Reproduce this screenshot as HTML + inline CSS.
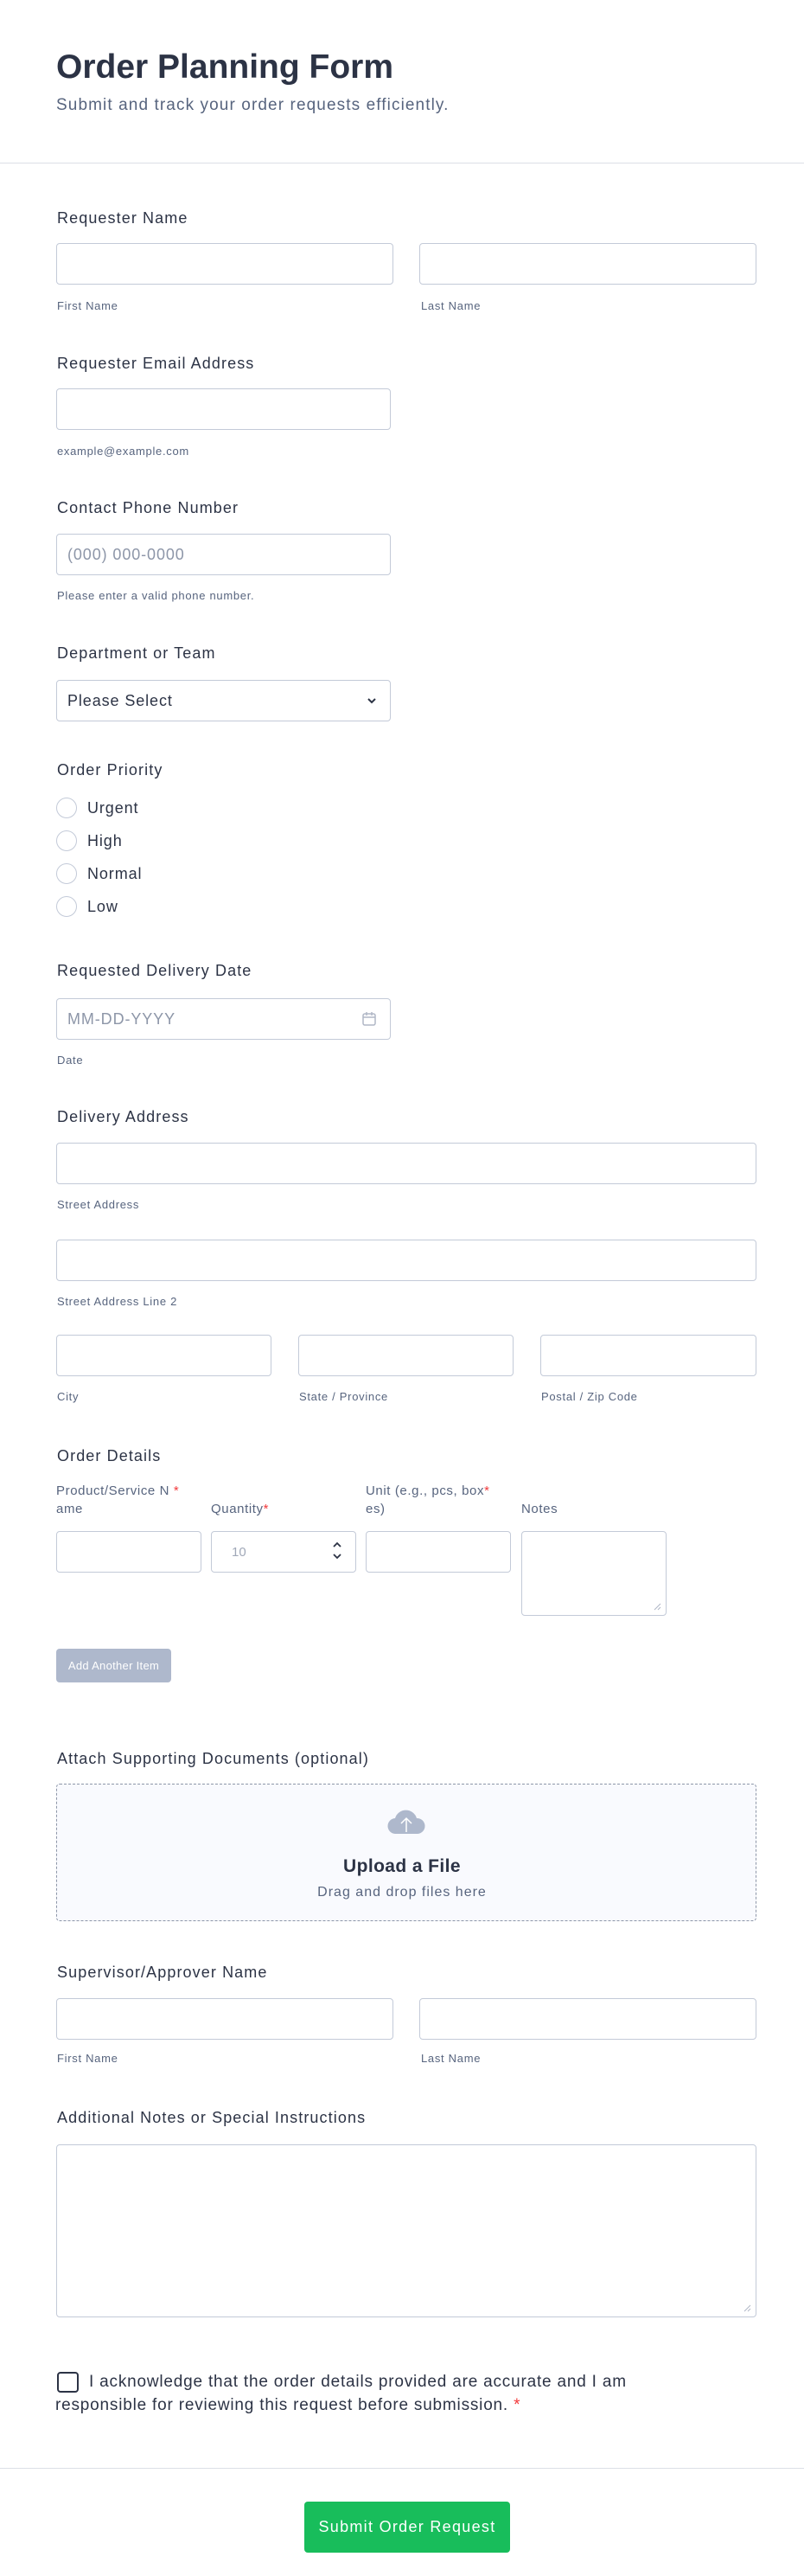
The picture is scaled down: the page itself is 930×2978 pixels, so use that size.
<!DOCTYPE html>
<html><head><meta charset="utf-8"><style>
*{box-sizing:border-box;margin:0;padding:0}
body{width:930px;height:2978px;position:relative;background:#fff;font-family:"Liberation Sans",Arial,sans-serif;color:#2c3345;overflow:hidden}
.a{position:absolute}
.t{position:absolute;white-space:nowrap;line-height:1}
.lbl{font-size:18px;color:#2c3345;letter-spacing:1.1px}
.sub{font-size:13px;color:#57647e;letter-spacing:0.7px}
.in{position:absolute;border:1px solid #c3cad8;border-radius:4px;background:#fff}
.ph{font-size:18px;color:#8d96a8;letter-spacing:0.9px}
.hr{position:absolute;left:0;width:930px;height:1px;background:#dcdfe6}
.radio{position:absolute;width:24px;height:24px;border:1.5px solid #c3cad8;border-radius:50%;left:65px}
.rl{font-size:18px;color:#2c3345;letter-spacing:0.9px}
.req{color:#f23a3c}
.ch{font-size:15px;color:#57647e;letter-spacing:0.6px}
</style></head><body>
<div class="t" style="left:65px;top:58px;font-size:39px;font-weight:bold;color:#2c3345">Order Planning Form</div>
<div class="t" style="left:65px;top:112px;font-size:19px;color:#57647e;letter-spacing:1.1px">Submit and track your order requests efficiently.</div>
<div class="hr" style="top:188px"></div>

<div class="t lbl" style="left:66px;top:243px">Requester Name</div>
<div class="in" style="left:65px;top:281px;width:390px;height:48px"></div>
<div class="in" style="left:485px;top:281px;width:390px;height:48px"></div>
<div class="t sub" style="left:66px;top:347px">First Name</div>
<div class="t sub" style="left:487px;top:347px">Last Name</div>

<div class="t lbl" style="left:66px;top:411px">Requester Email Address</div>
<div class="in" style="left:65px;top:449px;width:387px;height:48px"></div>
<div class="t sub" style="left:66px;top:515px">example@example.com</div>

<div class="t lbl" style="left:66px;top:578px">Contact Phone Number</div>
<div class="in" style="left:65px;top:617px;width:387px;height:48px"></div>
<div class="t ph" style="left:78px;top:632px">(000) 000-0000</div>
<div class="t sub" style="left:66px;top:682px">Please enter a valid phone number.</div>

<div class="t lbl" style="left:66px;top:746px">Department or Team</div>
<div class="in" style="left:65px;top:786px;width:387px;height:48px"></div>
<div class="t" style="left:78px;top:801px;font-size:18px;color:#2c3345;letter-spacing:0.9px">Please Select</div>
<svg class="a" style="left:423px;top:804px" width="14" height="12" viewBox="0 0 14 12"><path d="M3 4l4 4 4-4" fill="none" stroke="#2c3345" stroke-width="2"/></svg>

<div class="t lbl" style="left:66px;top:881px">Order Priority</div>
<div class="radio" style="top:922px"></div><div class="t rl" style="left:101px;top:925px">Urgent</div>
<div class="radio" style="top:960px"></div><div class="t rl" style="left:101px;top:963px">High</div>
<div class="radio" style="top:998px"></div><div class="t rl" style="left:101px;top:1001px">Normal</div>
<div class="radio" style="top:1036px"></div><div class="t rl" style="left:101px;top:1039px">Low</div>

<div class="t lbl" style="left:66px;top:1113px">Requested Delivery Date</div>
<div class="in" style="left:65px;top:1154px;width:387px;height:48px"></div>
<div class="t ph" style="left:78px;top:1169px">MM-DD-YYYY</div>
<svg class="a" style="left:418px;top:1169px" width="18" height="18" viewBox="0 0 18 18"><rect x="2" y="3" width="14" height="13" rx="2" fill="none" stroke="#b0b7c6" stroke-width="1.5"/><path d="M2 7h14M6 1v4M12 1v4" stroke="#b0b7c6" stroke-width="1.5"/></svg>
<div class="t sub" style="left:66px;top:1219px">Date</div>

<div class="t lbl" style="left:66px;top:1282px">Delivery Address</div>
<div class="in" style="left:65px;top:1321px;width:810px;height:48px"></div>
<div class="t sub" style="left:66px;top:1386px">Street Address</div>
<div class="in" style="left:65px;top:1433px;width:810px;height:48px"></div>
<div class="t sub" style="left:66px;top:1498px">Street Address Line 2</div>
<div class="in" style="left:65px;top:1543px;width:249px;height:48px"></div>
<div class="in" style="left:345px;top:1543px;width:249px;height:48px"></div>
<div class="in" style="left:625px;top:1543px;width:250px;height:48px"></div>
<div class="t sub" style="left:66px;top:1608px">City</div>
<div class="t sub" style="left:346px;top:1608px">State / Province</div>
<div class="t sub" style="left:626px;top:1608px">Postal / Zip Code</div>

<div class="t lbl" style="left:66px;top:1674px">Order Details</div>
<div class="t ch" style="left:65px;top:1716px">Product/Service N <span class="req">*</span></div>
<div class="t ch" style="left:65px;top:1737px">ame</div>
<div class="t ch" style="left:244px;top:1737px">Quantity<span class="req">*</span></div>
<div class="t ch" style="left:423px;top:1716px">Unit (e.g., pcs, box<span class="req">*</span></div>
<div class="t ch" style="left:423px;top:1737px">es)</div>
<div class="t ch" style="left:603px;top:1737px">Notes</div>
<div class="in" style="left:65px;top:1770px;width:168px;height:48px"></div>
<div class="in" style="left:244px;top:1770px;width:168px;height:48px"></div>
<div class="t" style="left:268px;top:1787px;font-size:15px;color:#a0a8b8">10</div>
<svg class="a" style="left:383px;top:1780px" width="14" height="26" viewBox="0 0 14 26"><path d="M3 8l4-4 4 4M3 17l4 4 4-4" fill="none" stroke="#2c3345" stroke-width="1.8"/></svg>
<div class="in" style="left:423px;top:1770px;width:168px;height:48px"></div>
<div class="in" style="left:603px;top:1770px;width:168px;height:98px"></div>
<svg class="a" style="left:755px;top:1852px" width="10" height="10" viewBox="0 0 10 10"><path d="M9 2L2 9M9 6L6 9" stroke="#b0b7c6"/></svg>
<div class="a" style="left:65px;top:1906px;width:133px;height:39px;background:#aeb8cc;border-radius:4px;color:#fff;font-size:13px;line-height:39px;text-align:center;letter-spacing:0.3px">Add Another Item</div>

<div class="t lbl" style="left:66px;top:2024px">Attach Supporting Documents (optional)</div>
<div class="a" style="left:65px;top:2062px;width:810px;height:159px;border:1.5px dashed #8d96a8;border-radius:4px;background:#f9fafe"></div>
<svg class="a" style="left:446px;top:2088px" width="48" height="36" viewBox="0 0 48 36"><path d="M12 32a9 9 0 0 1-1-18 13 13 0 0 1 25 0 9 9 0 0 1 1 18z" fill="#aeb8cc"/><path d="M24 30V14M18 20l6-6 6 6" fill="none" stroke="#fff" stroke-width="1.5"/></svg>
<div class="t" style="left:0;width:930px;text-align:center;top:2147px;font-size:21px;font-weight:bold;color:#2c3345;letter-spacing:0.4px">Upload a File</div>
<div class="t" style="left:0;width:930px;text-align:center;top:2180px;font-size:16px;color:#57647e;letter-spacing:1px">Drag and drop files here</div>

<div class="t lbl" style="left:66px;top:2271px">Supervisor/Approver Name</div>
<div class="in" style="left:65px;top:2310px;width:390px;height:48px"></div>
<div class="in" style="left:485px;top:2310px;width:390px;height:48px"></div>
<div class="t sub" style="left:66px;top:2373px">First Name</div>
<div class="t sub" style="left:487px;top:2373px">Last Name</div>

<div class="t lbl" style="left:66px;top:2439px">Additional Notes or Special Instructions</div>
<div class="in" style="left:65px;top:2479px;width:810px;height:200px"></div>
<svg class="a" style="left:859px;top:2663px" width="10" height="10" viewBox="0 0 10 10"><path d="M9 2L2 9M9 6L6 9" stroke="#b0b7c6"/></svg>

<div class="a" style="left:66px;top:2742px;width:25px;height:24px;border:2px solid #2c3345;border-radius:4px"></div>
<div class="t" style="left:103px;top:2744px;font-size:19px;color:#2c3345;letter-spacing:0.8px">I acknowledge that the order details provided are accurate and I am</div>
<div class="t" style="left:64px;top:2771px;font-size:19px;color:#2c3345;letter-spacing:0.8px">responsible for reviewing this request before submission. <span class="req">*</span></div>

<div class="hr" style="top:2853px"></div>
<div class="a" style="left:352px;top:2892px;width:238px;height:59px;background:#18bd5b;border-radius:4px;color:#fff;font-size:18px;line-height:59px;text-align:center;letter-spacing:1.3px">Submit Order Request</div>
</body></html>
